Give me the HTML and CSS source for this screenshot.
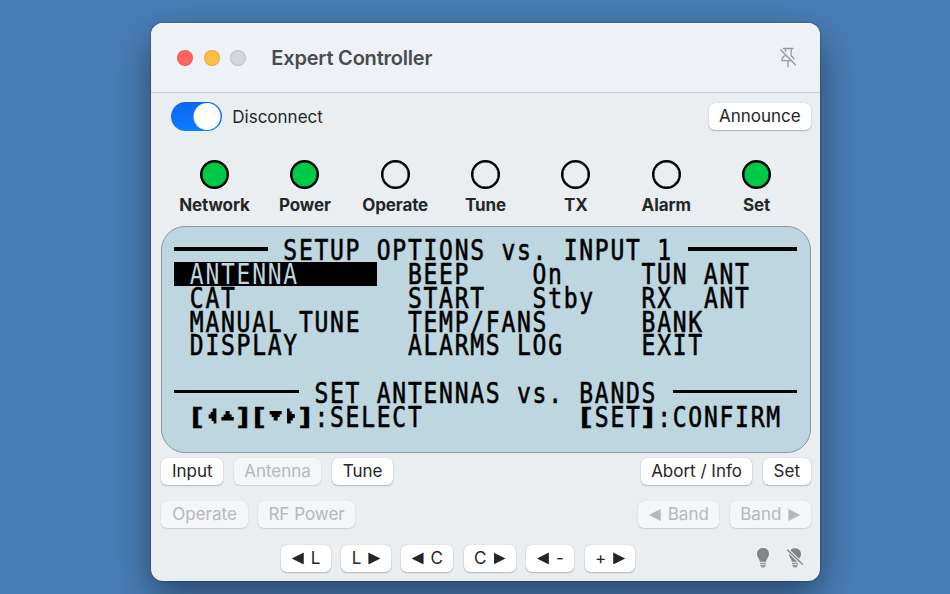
FILE: index.html
```
<!DOCTYPE html>
<html lang="en">
<head>
    <meta charset="utf-8">
    <title>Expert Controller</title>
    <link rel="stylesheet" href="styles.css">
</head>
<body>
    <div class="window">
        <header class="titlebar">
            <span class="dot dot-close"></span>
            <span class="dot dot-min"></span>
            <span class="dot dot-zoom"></span>
            <h1>Expert Controller</h1>
            <svg class="pin" width="18" height="22" viewBox="0 0 18 22">
                <path d="M4 1.5h10.500M5.700 1.500l.9 2.100v1.200M13 1.500l-.9 2.100v5.200c1.700.8 2.800 2.100 2.900 3.700M6.500 8.400C4.300 9.300 3 11.100 3 13.600h8.800M9 13.600v6.600M1.300 2.500l15.600 15.800"/>
            </svg>
        </header>

        <div class="connection">
            <span class="toggle"></span>
            <span class="toggle-label">Disconnect</span>
            <button class="w-announce">Announce</button>
        </div>

        <div class="leds">
            <div class="led on"><i></i>Network</div>
            <div class="led on"><i></i>Power</div>
            <div class="led"><i></i>Operate</div>
            <div class="led"><i></i>Tune</div>
            <div class="led"><i></i>TX</div>
            <div class="led"><i></i>Alarm</div>
            <div class="led on"><i></i>Set</div>
        </div>

        <!-- 40 x 8 character display -->
        <div class="lcd">
            <div class="row"><span class="rule c6"></span><span class="txt"> SETUP OPTIONS vs. INPUT 1 </span><span class="rule c7"></span></div>
            <div class="row"><span class="selected c13"><span class="txt"> ANTENNA     </span></span><span class="txt">  BEEP    On     TUN ANT</span></div>
            <div class="row"><span class="txt"> CAT           START   Stby   RX  ANT</span></div>
            <div class="row"><span class="txt"> MANUAL TUNE   TEMP/FANS      BANK</span></div>
            <div class="row"><span class="txt"> DISPLAY       ALARMS LOG     EXIT</span></div>
            <div class="row"></div>
            <div class="row"><span class="rule c8"></span><span class="txt"> SET ANTENNAS vs. BANDS </span><span class="rule c8"></span></div>
            <div class="row">
                <span class="txt"> <b>[</b></span>
                <svg class="keys" viewBox="0 0 31 24"><path d="M11.300 3.500v15h-2.700v-2.500h-2v-2.500h-3v-4h2v-2.500h2v-3.500zM16.300 15.500v-3.500h2.200v-2.500h2v-3.500h4v3.500h2v2.500h2.200v3.500z"/></svg>
                <span class="txt"><b>]</b><b>[</b></span>
                <svg class="keys" viewBox="0 0 31 24"><path d="M1.600 6h12v3.500h-2v2.500h-2v3.500h-4v-3.500h-2v-2.500h-2zM19 3.500h2.700v3h2v2.500h3v4h-2v2.500h-2v3h-3.700z"/></svg>
                <span class="txt"><b>]</b>:SELECT          <b>[</b>SET<b>]</b>:CONFIRM</span>
            </div>
        </div>

        <div class="buttons first">
            <button class="w-input">Input</button>
            <button class="w-antenna" disabled>Antenna</button>
            <button class="w-tune">Tune</button>
            <button class="w-abort push">Abort / Info</button>
            <button class="w-set">Set</button>
        </div>

        <div class="buttons second">
            <button class="w-operate" disabled>Operate</button>
            <button class="w-rf" disabled>RF Power</button>
            <button class="w-band push" disabled><i class="left"></i>Band</button>
            <button class="w-band" disabled>Band<i class="right"></i></button>
        </div>

        <div class="buttons third">
            <button class="w-l"><i class="left"></i>L</button>
            <button class="w-l">L<i class="right"></i></button>
            <button class="w-c"><i class="left"></i>C</button>
            <button class="w-c">C<i class="right"></i></button>
            <button class="w-minus"><i class="left"></i>-</button>
            <button class="w-plus">+<i class="right"></i></button>
            <svg class="bulb push" width="14" height="20" viewBox="0 0 14 20">
                <path d="M7 0C3.300 0 1 2.600 1 5.800c0 3.400 2.400 4.400 2.900 8h6.200c.5-3.600 2.900-4.600 2.900-8C13 2.600 10.700 0 7 0z"/>
                <path d="M4 14.800h6v1.400H4zM4.200 17h5.600c-.2 1.600-1.200 2.600-2.800 2.600s-2.600-1-2.800-2.600z" opacity=".8"/>
            </svg>
            <svg class="bulb bulb-off" width="18" height="20" viewBox="0 0 18 20">
                <path d="M9 .2C5.300.2 3 2.800 3 6c0 3.400 2.400 4.400 2.900 7.800h6.200c.5-3.600 2.900-4.400 2.900-7.800C15 2.800 12.700.2 9 .2z"/>
                <path d="M6 14.800h6v1.400H6zM6.200 17h5.600c-.2 1.600-1.200 2.600-2.800 2.600s-2.600-1-2.800-2.600z" opacity=".8"/>
                <path class="gap" d="M1.200 1.800l15.600 14.800"/>
                <path class="slash" d="M1.200 1.800l15.600 14.800"/>
            </svg>
        </div>
    </div>
</body>
</html>
```

FILE: styles.css
```
body {
    margin: 0;
    height: 594px;
    overflow: hidden;
    background-color: #497db6;
    font-family: Inter, "Liberation Sans", sans-serif;
    color: #242628;
}

.window {
    box-sizing: border-box;
    width: 668.5px;
    height: 558px;
    margin: 23.3px 0 0 151.3px;
    border-radius: 12px;
    background-color: #eaeef1;
    box-shadow: 0 0 2px rgba(0, 0, 0, 0.5), 0 16px 38px rgba(0, 0, 0, 0.42);
    overflow: hidden;
}

.titlebar {
    box-sizing: border-box;
    display: flex;
    align-items: center;
    height: 69.7px;
    padding: 0 23px 1px 26px;
    border-top: 1px solid #fafcfd;
    border-bottom: 1px solid #c8cccf;
    background-color: #eef2f7;
}

.dot {
    box-sizing: border-box;
    width: 16px;
    height: 16px;
    margin-right: 10.5px;
    border-radius: 50%;
    border: 1px solid rgba(0, 0, 0, 0.1);
}

.dot-close {
    background-color: #ff665d;
}

.dot-min {
    background-color: #ffbd44;
}

.dot-zoom {
    background-color: #d3d7db;
}

h1 {
    margin: 0 auto 0 14.5px;
    font-size: 20px;
    font-weight: 600;
    letter-spacing: -0.2px;
    color: #494b4e;
}

.pin {
    fill: none;
    stroke: #96999c;
    stroke-width: 1.3;
}

.connection {
    display: flex;
    align-items: center;
    height: 29px;
    margin: 9px 9px 0 20px;
    font-size: 17px;
}

.toggle {
    box-sizing: border-box;
    width: 50.5px;
    height: 29px;
    border-radius: 15px;
    background: radial-gradient(circle at 36px 14.5px, #fff 13px, transparent 14px), linear-gradient(#0a66f0, #0a7dff);
}

.toggle-label {
    margin: 1px auto 0 10.5px;
}

button {
    box-sizing: border-box;
    display: flex;
    align-items: center;
    justify-content: center;
    height: 27px;
    padding: 0;
    border: none;
    border-radius: 6px;
    background-color: #fff;
    box-shadow: 0 0 1px rgba(0, 0, 0, 0.25), 0 1px 1.5px rgba(0, 0, 0, 0.22);
    color: #242628;
    font-family: inherit;
    font-size: 17px;
    line-height: 25px;
    white-space: nowrap;
}

button:disabled {
    background-color: #f4f6f8;
    box-shadow: 0 0 1px rgba(0, 0, 0, 0.15), 0 1px 1.5px rgba(0, 0, 0, 0.12);
    color: #b6b8ba;
}

.leds {
    display: grid;
    grid-template-columns: repeat(7, 90.35px);
    margin: 29px 0 0 18px;
}

.led {
    display: flex;
    flex-direction: column;
    align-items: center;
    gap: 5px;
    font-size: 17px;
    font-weight: 700;
    line-height: 22px;
    letter-spacing: -0.1px;
}

.led i {
    box-sizing: border-box;
    width: 29px;
    height: 29px;
    border: 2.5px solid #000;
    border-radius: 50%;
    box-shadow: inset 0 0 0 0.5px #000;
}

.led.on i {
    background-color: #00c946;
}

.lcd {
    box-sizing: border-box;
    width: 649.5px;
    height: 227px;
    margin: 10px 0 0 10px;
    padding: 11.5px 0 0 12px;
    border: 1.5px solid #8b989f;
    border-radius: 24px;
    background-color: #bdd6df;
    color: #000;
    overflow: hidden;
}

.row {
    display: flex;
    height: 23.75px;
    white-space: pre;
    font-family: "DejaVu Sans Mono", monospace;
    font-size: 23px;
    line-height: 24px;
    letter-spacing: 1.73px;
}

.txt {
    display: block;
    transform: scaleY(1.2);
    -webkit-text-stroke: 0.5px currentColor;
}

/* wide square brackets round the key names */
.txt b {
    display: inline-block;
    transform: scale(1.45, 0.84);
}

.rule {
    height: 3.5px;
    margin-top: 9px;
    background-color: #000;
}

.selected {
    height: 24px;
    background-color: #000;
    color: #bdd6df;
}

.selected .txt {
    -webkit-text-stroke: 0;
}

.keys {
    width: 31.15px;
    height: 24px;
}

.c6 {
    width: 93.45px;
}

.c7 {
    width: 109px;
}

.c8 {
    width: 124.6px;
}

.c13 {
    width: 202.45px;
}

.buttons {
    display: flex;
    align-items: center;
    gap: 10.5px;
    margin: 0 9px 0 10px;
}

.first {
    margin-top: 5px;
}

.second {
    margin-top: 16.5px;
}

.third {
    margin: 16.5px 15.5px 0 130px;
}

.push {
    margin-left: auto;
}

button i {
    width: 12px;
    height: 12px;
    background-color: currentColor;
}

button .left {
    margin-right: 7px;
    clip-path: polygon(100% 0, 100% 100%, 0 50%);
}

button .right {
    margin-left: 7px;
    clip-path: polygon(0 0, 100% 50%, 0 100%);
}

.w-announce { width: 102px; }
.w-input { width: 62px; }
.w-antenna { width: 87.5px; }
.w-tune { width: 61.5px; }
.w-abort { width: 111.5px; }
.w-set { width: 48px; }
.w-operate { width: 86.5px; }
.w-rf { width: 96.5px; }
.w-band { width: 81px; }
.w-l { width: 49.5px; }
.w-c { width: 52px; }
.w-minus { width: 48px; }
.w-plus { width: 50.5px; }

.bulb {
    fill: #838689;
}

.bulb-off {
    margin-left: 5.5px;
}

.bulb .gap {
    stroke: #eaeef1;
    stroke-width: 3.5;
}

.bulb .slash {
    stroke: #838689;
    stroke-width: 1.4;
}
```
